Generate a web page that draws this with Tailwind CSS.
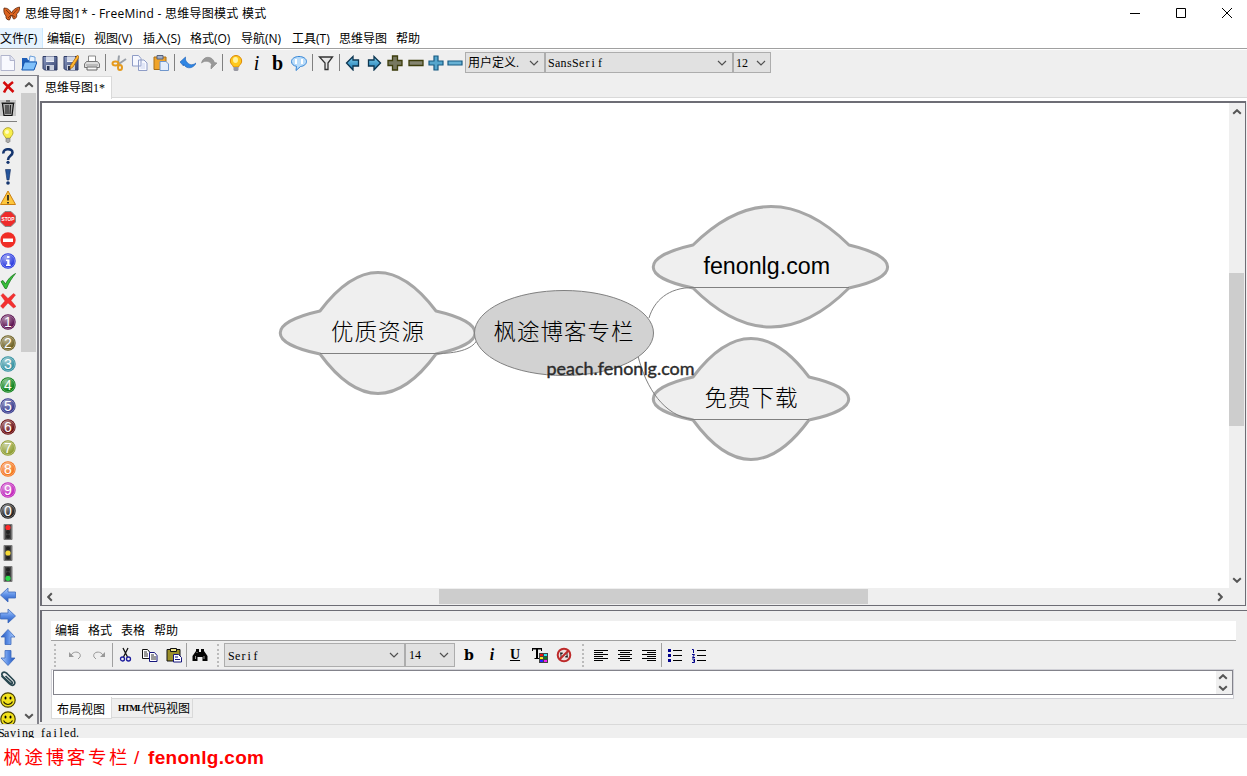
<!DOCTYPE html>
<html lang="zh-CN">
<head>
<meta charset="utf-8">
<title>FreeMind</title>
<script src="https://cdn.jsdelivr.net/npm/@tailwindcss/browser@4"></script>
</head>
<body class="w-[1247px] h-[776px] overflow-hidden bg-white text-black font-['Open_Sans','Noto_Sans_CJK_SC',sans-serif] text-[12px] leading-none whitespace-nowrap flex flex-col">
<svg class="absolute w-0 h-0">
  <defs>
    <linearGradient id="gb" x1="0" y1="0" x2="0" y2="1"><stop offset="0" stop-color="#b8d4ff"/><stop offset=".5" stop-color="#5b8ee6"/><stop offset="1" stop-color="#2454b8"/></linearGradient>
    <linearGradient id="gt" x1="0" y1="0" x2="0" y2="1"><stop offset="0" stop-color="#7fd0ee"/><stop offset="1" stop-color="#1a76b0"/></linearGradient>
    <radialGradient id="gl" cx=".35" cy=".25" r=".7"><stop offset="0" stop-color="#fff" stop-opacity=".55"/><stop offset="1" stop-color="#fff" stop-opacity="0"/></radialGradient>
    <symbol id="ball" viewBox="0 0 16 16"><circle cx="8" cy="8" r="7.7" fill="currentColor"/><circle cx="8" cy="8" r="6.6" fill="url(#gl)" stroke="#fff" stroke-opacity=".3"/></symbol>
    <symbol id="arr" viewBox="0 0 16 16"><path d="M.5 8 8 1v4h7.5v6H8v4z" fill="url(#gb)" stroke="#3c69bd" stroke-width=".8"/></symbol>
    <symbol id="tarr" viewBox="0 0 16 16"><path d="M1.500 8 8 1.500V5h5.500v6H8v4z" fill="url(#gt)" stroke="#0c3550" stroke-width="1.300"/></symbol>
    <symbol id="light" viewBox="0 0 16 16"><rect x="3.500" y="0" width="9" height="16" rx="1" fill="#777"/><rect x="5" y="1" width="6" height="14" fill="#444"/><circle cx="8" cy="3.500" r="2" fill="#222"/><circle cx="8" cy="8" r="2" fill="#222"/><circle cx="8" cy="12.500" r="2" fill="#222"/></symbol>
    <symbol id="smile" viewBox="0 0 16 16"><circle cx="8" cy="8" r="7.200" fill="#f2e21c" stroke="#4c4200" stroke-width="1.200"/><ellipse cx="5.500" cy="6" rx="1" ry="1.600"/><ellipse cx="10.500" cy="6" rx="1" ry="1.600"/><path d="M3.500 9.500c2 4 7 4 9 0" fill="none" stroke="#2a2500" stroke-width="1.100"/></symbol>
    <linearGradient id="gf" x1="0" y1="0" x2="1" y2="1"><stop offset="0" stop-color="#8d9cc4"/><stop offset="1" stop-color="#34426e"/></linearGradient>
    <symbol id="floppy" viewBox="0 0 16 16"><path d="M1 1.500h14v13.500H2.500L1 13.500z" fill="url(#gf)" stroke="#303d66"/><path d="M4 1.500h8v5.500H4z" fill="#eef1f8"/><path d="M4 3h8M4 5h8" stroke="#b6bfd6"/><path d="M4 10h8v5H4z" fill="#c9cfdd"/><path d="M5 11h2.500v4H5z" fill="#26304f"/></symbol>
    <symbol id="chev" viewBox="0 0 10 6"><path d="M1 1l4 4 4-4" fill="none" stroke="#505050" stroke-width="1.200"/></symbol>
    <symbol id="sc" viewBox="0 0 10 6"><path d="M1.200 4.800 5 1.200l3.800 3.600" fill="none" stroke="#555" stroke-width="2"/></symbol>
  </defs>
</svg>

<!-- title bar -->
<header class="h-[28px] shrink-0 flex items-center">
  <svg class="w-[17px] h-4 ml-[3px]" viewBox="0 0 17 16"><path d="M1 2c4 0 6 2 7.500 5C10 4 12 2 16.500 1c.5 3-1 6-3 7 1 3-1 5-3 5l-2-4-2 5c-2 0-4-1-3.500-4C1 8 .500 5 1 2z" fill="#dd6420" stroke="#5a260c" stroke-width=".8"/><path d="M3 4l4 4M14.500 3 10 8m-5 4 3-3m4 2-3-2" stroke="#5a260c" stroke-width=".7"/></svg>
  <div class="ml-[5px] text-[12px] tracking-[0.26px] h-4 leading-4">思维导图1* - FreeMind - 思维导图模式 模式</div>
  <div class="ml-auto flex items-center pr-[14px] gap-[34px] -mt-[2px]">
    <svg class="w-3 h-3" viewBox="0 0 12 12"><path d="M1 6.500h10" stroke="#000"/></svg>
    <svg class="w-3 h-3" viewBox="0 0 12 12"><path d="M1.500 1.500h9v9h-9z" fill="none" stroke="#000"/></svg>
    <svg class="w-3 h-3" viewBox="0 0 12 12"><path d="M1 1l10 10M11 1 1 11" stroke="#000"/></svg>
  </div>
</header>
<!-- menu bar -->
<nav class="h-[21px] shrink-0 flex border-b border-[#a0a0a0] leading-[22px] text-[12px]">
  <div class="w-[43px] bg-[#e5f3ff] border-r border-[#cce8ff] mr-1">文件(F)</div><div class="w-[47px]">编辑(E)</div><div class="w-[49px]">视图(V)</div><div class="w-[47px]">插入(S)</div><div class="w-[51px]">格式(O)</div><div class="w-[51px]">导航(N)</div><div class="w-[47px]">工具(T)</div><div class="w-[57px]">思维导图</div><div>帮助</div>
</nav>
<!-- main toolbar -->
<div class="h-[26px] shrink-0 bg-[#efefef] border-t border-white flex items-center pl-0">
  <div class="flex items-center -ml-[3px] w-[468px] shrink-0 [&>svg]:w-4 [&>svg]:h-4 [&>svg]:shrink-0 [&>svg]:mx-[2.5px] [&>b]:w-[21px] [&>b]:shrink-0 [&>b]:text-center [&>i]:w-px [&>i]:h-[17px] [&>i]:ml-[3px] [&>i]:mr-[2px] [&>i]:bg-[#808080] [&>i]:shrink-0">
    <svg viewBox="0 0 16 16"><path d="M1 .5h9.500L14.500 5v10.500H1z" fill="#f8f9fe" stroke="#b0b4cc"/><path d="M10 1v4.500h4" fill="#dfe3f2" stroke="#b0b4cc"/></svg>
    <svg viewBox="0 0 16 16"><path d="M1 3h5l1 2h7v9H1z" fill="#1f5fb8"/><path d="M9 1l5 1v5H8z" fill="#e8f3ff" stroke="#4d8bd2" stroke-width=".8"/><path d="M3.500 7H16l-3 8H.800z" fill="#7fc0fa" stroke="#1556ae"/></svg>
    <svg><use href="#floppy"/></svg>
    <svg viewBox="0 0 16 16"><use href="#floppy"/><path d="M14.500 0 16 2 10 12l-3 2 .500-3.500z" fill="#ffb62e" stroke="#a55f07" stroke-width=".7"/></svg>
    <svg viewBox="0 0 16 16"><path d="M4.500 1h7v6h-7z" fill="#fff" stroke="#888"/><path d="M2.500 6.500h11l2 2.500v3.500H.500V9z" fill="#ddd" stroke="#777"/><path d="M3 12h10v3H3z" fill="#f8f8f8" stroke="#666"/><path d="M2 10h12" stroke="#999"/></svg>
    <i></i>
    <svg viewBox="0 0 16 16"><path d="M8 .5 7 9M15 4 7 9.500" stroke="#9aa0a8" stroke-width="2"/><ellipse cx="4.500" cy="8.500" rx="3" ry="2" fill="none" stroke="#e59a1d" stroke-width="2"/><ellipse cx="9" cy="12.500" rx="2" ry="2.500" fill="none" stroke="#e59a1d" stroke-width="2"/></svg>
    <svg viewBox="0 0 16 16"><path d="M.5 .5h6l2.500 3V11H.5zM6.500 5h5.500l3 3v7.500h-8.500z" fill="#f6f8ff" stroke="#8e9cc6"/><path d="M8.500 9h4.500m-4.500 2h4.500m-4.500 2h4.500" stroke="#ccd4ee"/></svg>
    <svg viewBox="0 0 16 16"><path d="M1 2h12v12.500H1z" fill="#f0a42a" stroke="#a86e15"/><path d="M4 .500h6v3.500H4z" fill="#a3b0c8" stroke="#56637e"/><path d="M7 6.500h6l2.500 2.500v6.500H7z" fill="#e4eefc" stroke="#6f96cc"/></svg>
    <i></i>
    <svg viewBox="0 0 16 16"><path d="M0 7 5.500 2v3C8 10 12 11 16 8c-1 4-9 8-12.500 1v2z" fill="#2f86e4" stroke="#1e5fb5" stroke-width=".6"/></svg>
    <svg viewBox="0 0 16 16"><path d="M16 8l-6 6v-3.500h1C10 6 4 5 .500 8 2 1 11 0 13.500 7.500z" fill="#999" stroke="#888" stroke-width=".6"/></svg>
    <i></i>
    <svg viewBox="0 0 16 16"><path d="M8 .5a5.700 5.700 0 0 0-5.700 5.500c0 3 2.700 4 3.200 6h5c.5-2 3.200-3 3.200-6A5.700 5.700 0 0 0 8 .5z" fill="#ffc91c" stroke="#dd8a05"/><path d="M5.500 12h5v3l-1 1h-3l-1-1z" fill="#9797a0"/><ellipse cx="7.500" cy="5" rx="2.500" ry="3" fill="#fff3a0"/></svg>
    <b class="font-['Liberation_Serif',serif] text-[20px] italic font-medium">i</b>
    <b class="font-['Liberation_Serif',serif] text-[20px]">b</b>
    <svg viewBox="0 0 16 16"><path d="M8 1.500c4 0 7.500 2 7.500 5 0 2.500-2.500 4.700-6 5L5 15.500l.5-4.200C2.500 11 .500 9 .500 6.500c0-3 3.500-5 7.500-5z" fill="#b9dcfa" stroke="#3585d5"/><path d="M5 4v5m6-5v5" stroke="#fff" stroke-width="2"/></svg>
    <i></i>
    <svg viewBox="0 0 16 16"><path d="M1.500 2h13L10 8v6.500H7V8z" fill="#e6e6e6" stroke="#333" stroke-width="1.300"/></svg>
    <i></i>
    <svg><use href="#tarr"/></svg>
    <svg viewBox="0 0 16 16"><g transform="matrix(-1 0 0 1 16 0)"><use href="#tarr" width="16" height="16"/></g></svg>
    <svg viewBox="0 0 16 16"><path d="M5.500 1h5v4.500H15v5h-4.500V15h-5v-4.500H1v-5h4.500z" fill="#777860" stroke="#3d3d0c" stroke-width="1.300"/></svg>
    <svg viewBox="0 0 16 16"><path d="M1 5.500h14v5H1z" fill="#858571" stroke="#3d3d0c" stroke-width="1.300"/></svg>
    <svg viewBox="0 0 16 16" class="ml-[1.5px]!"><path d="M6 1h4v5h5v4h-5v5H6v-5H1V6h5z" fill="#55a6cd" stroke="#175a82" stroke-width="1.200"/></svg>
    <svg viewBox="0 0 16 16" class="ml-[1px]!"><path d="M1 6h14v4H1z" fill="#67b1d4" stroke="#175a82" stroke-width="1.200"/></svg>
  </div>
  <div class="flex h-[21px] font-['Liberation_Serif','Noto_Sans_CJK_SC',serif] text-[12px] [&>div]:border [&>div]:border-[#adadad] [&>div]:bg-[#e1e1e1] [&>div]:flex [&>div]:items-center [&>div]:justify-between [&>div]:pl-[2px]">
    <div class="w-[80px] pr-[5px]"><span class="text-[12px]">用户定义.</span><svg class="w-[10px] h-[6px]"><use href="#chev"/></svg></div>
    <div class="w-[188px] pr-[5px]"><svg class="w-[60px] h-[14px]"><text y="11" x="0 7 12.500 19 24 31 37.500 43.500 50">SansSerif</text></svg><svg class="w-[10px] h-[6px]"><use href="#chev"/></svg></div>
    <div class="w-[38px] pr-[4px]"><span>12</span><svg class="w-[10px] h-[6px]"><use href="#chev"/></svg></div>
  </div>
</div>

<div class="h-[649px] shrink-0 flex bg-[#efefef]">
  <!-- icon palette -->
  <aside class="w-[39px] shrink-0 flex border-t border-r border-[#83838b] overflow-hidden">
    <div class="w-[21px] flex flex-col shrink-0 [&>svg]:w-4 [&>svg]:h-4 [&>svg]:shrink-0 [&>svg]:mt-[2.5px] [&>svg]:mb-[2.5px] text-[14px] font-['Liberation_Sans',sans-serif]">
      <svg viewBox="0 0 16 16"><path d="M3.500 3l10 10M13 3C9 6 6 9 4 13.500" stroke="#d40a0a" stroke-width="2.500"/></svg>
      <svg viewBox="0 0 16 16"><path d="M0 0h16v16H0z" fill="#c9c9c9"/><path d="M2.500 3.500h11L12 15.500H4z" fill="#aaa" stroke="#111" stroke-width="1.200"/><path d="M1.500 3h13M6 1h4M6 5v9m2-9v9m2.500-9-.5 9" stroke="#222" stroke-width="1.200"/></svg>
      <div class="h-[6px] shrink-0 pt-[3px]"><div class="h-px w-[17px] bg-[#808080]"></div></div>
      <svg viewBox="0 0 16 16"><path d="M8 .7a5 5 0 0 0-5 5c0 2.500 2.300 3.500 2.800 5.500h4.400c.500-2 2.800-3 2.800-5.500a5 5 0 0 0-5-5z" fill="#f8ee4c" stroke="#b5a832"/><path d="M6 11.500h4v3l-1 1H7l-1-1z" fill="#aaa" stroke="#777" stroke-width=".6"/><circle cx="7" cy="5" r="2" fill="#fffcc4"/></svg>
      <svg viewBox="0 0 16 16"><path d="M3.500 5.500C2.500 0 12.500 0 12.500 4.500 12.500 8 8 7.500 8 12" fill="none" stroke="#14346e" stroke-width="2.600"/><circle cx="8" cy="14.300" r="1.600" fill="#14346e"/></svg>
      <svg viewBox="0 0 16 16"><path d="M5.500.5h5L9 11H7z" fill="#24549b" stroke="#102c5e" stroke-width=".6"/><circle cx="8" cy="14" r="1.800" fill="#14346e"/></svg>
      <svg viewBox="0 0 16 16"><path d="M8 1 15.500 14.500H.500z" fill="#fdc63c" stroke="#cc8012" stroke-linejoin="round"/><path d="M8 5v5.500M8 12v1.500" stroke="#222" stroke-width="1.700"/></svg>
      <svg viewBox="0 0 16 16"><path d="M5 .5h6L15.500 5v6L11 15.500H5L.500 11V5z" fill="#ee2b2b" stroke="#888"/><text x="1.600" y="10" font-size="4.800" font-weight="bold" fill="#fff" textLength="12.800">STOP</text></svg>
      <svg viewBox="0 0 16 16"><circle cx="8" cy="8" r="7.700" fill="#f02d26"/><path d="M3 6.500h10v3.500H3z" fill="#fff"/></svg>
      <svg viewBox="0 0 16 16" class="text-[#2b3be0]"><use href="#ball"/><path d="M7 3h2.500v2H7zM6 6.500h3.500v5h1.200V13H6v-1.500h1.200V8H6z" fill="#fff"/></svg>
      <svg viewBox="0 0 16 16" class="mt-[1.5px]!"><path d="M1 8.500l2-1 2.500 3.500C8 6 11 3 15.500.500 12 5 9 9 6.500 15.500H5z" fill="#36bf3a" stroke="#16791b" stroke-width=".8"/></svg>
      <svg viewBox="0 0 16 16" class="mt-[1.5px]!"><path d="M1 2.500 3 .500l5 5 5.500-5L15.500 2 11 7.500l5 6-2.500 1.500-5.500-5L3 15.500.500 13 5 8z" fill="#f43030" stroke="#cf1c1c" stroke-width=".4"/></svg>
      <svg viewBox="0 0 16 16" class="text-[#5c1050]"><use href="#ball"/><text x="8" y="13" text-anchor="middle" fill="#fff">1</text></svg>
      <svg viewBox="0 0 16 16" class="text-[#6d6020]"><use href="#ball"/><text x="8" y="13" text-anchor="middle" fill="#fff">2</text></svg>
      <svg viewBox="0 0 16 16" class="text-[#3090a0]"><use href="#ball"/><text x="8" y="13" text-anchor="middle" fill="#fff">3</text></svg>
      <svg viewBox="0 0 16 16" class="text-[#0a8015]"><use href="#ball"/><text x="8" y="13" text-anchor="middle" fill="#fff">4</text></svg>
      <svg viewBox="0 0 16 16" class="text-[#34388c]"><use href="#ball"/><text x="8" y="13" text-anchor="middle" fill="#fff">5</text></svg>
      <svg viewBox="0 0 16 16" class="text-[#680a0e]"><use href="#ball"/><text x="8" y="13" text-anchor="middle" fill="#fff">6</text></svg>
      <svg viewBox="0 0 16 16" class="text-[#8f9e32]"><use href="#ball"/><text x="8" y="13" text-anchor="middle" fill="#fff">7</text></svg>
      <svg viewBox="0 0 16 16" class="text-[#f4741c]"><use href="#ball"/><text x="8" y="13" text-anchor="middle" fill="#fff">8</text></svg>
      <svg viewBox="0 0 16 16" class="text-[#c026bc]"><use href="#ball"/><text x="8" y="13" text-anchor="middle" fill="#fff">9</text></svg>
      <svg viewBox="0 0 16 16" class="text-[#1e1e1e]"><use href="#ball"/><text x="8" y="13" text-anchor="middle" fill="#fff">0</text></svg>
      <svg viewBox="0 0 16 16"><use href="#light"/><circle cx="8" cy="3.500" r="2.600" fill="#ff2a2a"/></svg>
      <svg viewBox="0 0 16 16"><use href="#light"/><circle cx="8" cy="8" r="2.600" fill="#f5d935"/></svg>
      <svg viewBox="0 0 16 16"><use href="#light"/><circle cx="8" cy="12.300" r="2.600" fill="#2cd94a"/></svg>
      <svg viewBox="0 0 16 16"><use href="#arr"/></svg>
      <svg viewBox="0 0 16 16"><g transform="matrix(-1 0 0 1 16 0)"><use href="#arr" width="16" height="16"/></g></svg>
      <svg viewBox="0 0 16 16"><g transform="rotate(90 8 8)"><use href="#arr" width="16" height="16"/></g></svg>
      <svg viewBox="0 0 16 16"><g transform="rotate(-90 8 8)"><use href="#arr" width="16" height="16"/></g></svg>
      <svg viewBox="0 0 16 16"><path d="M1.500 5 9 12.500c4 4 8 0 4.500-3.500L7 2.500C3.500-.500 0 2.500 3 5.500l7 6.500c2 1.500 3 0 2-1L5.500 5" fill="none" stroke="#28464f" stroke-width="1.700"/></svg>
      <svg><use href="#smile"/></svg>
      <svg class="mt-[1px]!"><use href="#smile"/></svg>
    </div>
    <div class="w-[15px] shrink-0 flex flex-col items-center mr-[1px]">
      <svg class="w-[10px] h-[6px] mt-[6px] mb-[5px] shrink-0"><use href="#sc"/></svg>
      <div class="w-[15px] h-[259px] bg-[#cdcdcd] shrink-0"></div>
      <svg class="w-[10px] h-[6px] mt-auto mb-[5px] rotate-180 shrink-0"><use href="#sc"/></svg>
    </div>
    <div class="w-px bg-[#83838b]"></div>
  </aside>

  <main class="flex-1 min-w-0 flex flex-col">
    <!-- document tab -->
    <div class="h-[26px] shrink-0 flex items-start border-b-[3px] border-white">
      <div class="w-[73px] h-[23px] mt-[1px] bg-white border-t border-r border-[#d9d9d9] pl-[6px] leading-[19px] text-[12px] font-['Noto_Sans_CJK_SC',sans-serif]">思维导图<span class="font-['Liberation_Serif',serif] text-[12px]">1*</span></div>
      <div class="flex-1 h-[23px] border-b border-[#d9d9d9]"></div>
    </div>
    <!-- map view -->
    <section class="ml-px h-[505px] shrink-0 w-[1206px] border-2 border-r border-b border-[#6d6d75] flex flex-col bg-[#efefef]">
      <div class="h-[485px] flex shrink-0">
        <svg class="w-[1187px] h-[485px] bg-white shrink-0" viewBox="42 103 1187 485">
          <g fill="#efefef" stroke="#a6a6a6" stroke-width="3" stroke-linejoin="round">
            <path d="M693 245Q771 168 849 245C900 257 901 277 849 288Q771 366 693 288C640 277 640 257 693 245z"/>
            <path d="M693 377Q751 300 809 377C862 389 862 409 809 420Q751 499 693 420C640 409 640 389 693 377z"/>
            <path d="M320 311Q378 234 436 311C488 323 488 343 436 354Q378 433 320 354C267 343 267 323 320 311z"/>
          </g>
          <g fill="none" stroke="#808080">
            <path d="M320 353.500H437C455 353.500 472 350 477 340M693 287.500H849M649 318C654 301 668 287.500 693 287.500M693 419.500H809M638 356C646 388 664 416 693 419.500"/>
            <ellipse cx="564" cy="333" rx="89.500" ry="42.500" fill="#d2d2d2"/>
          </g>
          <g font-family="'Noto Sans CJK SC',sans-serif" font-weight="300" font-size="22.500">
            <text x="331" y="340" textLength="93">优质资源</text>
            <text x="493.500" y="340" textLength="140">枫途博客专栏</text>
            <text x="704.500" y="406" textLength="93">免费下载</text>
          </g>
          <text x="703.500" y="274" font-family="Liberation Sans" font-size="23.500" textLength="126.500" lengthAdjust="spacingAndGlyphs">fenonlg.com</text>
          <text x="546.500" y="375" font-family="Lato" font-size="18" fill="#2b2b2b" stroke="#2b2b2b" stroke-width=".4" textLength="148" lengthAdjust="spacingAndGlyphs">peach.fenonlg.com</text>
        </svg>
        <div class="w-4 flex flex-col items-center shrink-0 pr-px">
          <svg class="w-[10px] h-[6px] mt-[6px] mb-[158px] shrink-0"><use href="#sc"/></svg>
          <div class="w-[15px] h-[153px] bg-[#cdcdcd]"></div>
          <svg class="w-[10px] h-[6px] mt-auto mb-[5px] rotate-180 shrink-0"><use href="#sc"/></svg>
        </div>
      </div>
      <div class="flex items-center h-[17px]">
        <svg class="w-[6px] h-[10px] ml-[5px] shrink-0" viewBox="0 0 6 10"><path d="M4.800 1.200 1.200 5l3.600 3.800" fill="none" stroke="#555" stroke-width="2"/></svg>
        <div class="ml-[386px] w-[429px] h-[15px] bg-[#cdcdcd]"></div>
        <svg class="w-[6px] h-[10px] ml-[349px] shrink-0" viewBox="0 0 6 10"><path d="M1.200 1.200 4.800 5 1.200 8.800" fill="none" stroke="#555" stroke-width="2"/></svg>
      </div>
    </section>
    <!-- note editor -->
    <section class="ml-px mt-1 h-[112px] shrink-0 border-l-2 border-t border-[#6d6d75] pl-[9px] pt-[10px] flex flex-col items-start">
      <div class="w-[1185px] h-[20px] bg-white border-b border-[#a0a0a0] shrink-0 flex gap-[9px] pl-1 leading-[19px] text-[12px]"><span>编辑</span><span>格式</span><span>表格</span><span>帮助</span></div>
      <div class="h-[28px] shrink-0 flex items-center [&>svg]:w-4 [&>svg]:h-4 [&>svg]:shrink-0 [&>svg]:mr-2 [&>i]:w-px [&>i]:h-[24px] [&>i]:bg-[#a0a0a0] [&>i]:shrink-0">
        <div class="w-0 h-[23px] ml-[3px] border-l-2 border-dotted border-[#bbb]"></div>
        <svg class="ml-[11px]" viewBox="0 0 16 16"><path d="M4 8c3-5 11-3 9 2l-2 2" fill="none" stroke="#999"/><path d="M2 5v5h5z" fill="#999"/></svg>
        <svg class="mr-[5px]!" viewBox="0 0 16 16"><path d="M12 8C9 3 1 5 3 10l2 2" fill="none" stroke="#999"/><path d="M14 5v5H9z" fill="#999"/></svg>
        <i></i>
        <svg class="ml-[5px]" viewBox="0 0 16 16"><path d="M5 1l4.500 9M10 1 5.500 10" stroke="#111" stroke-width="1.300"/><circle cx="4.500" cy="12" r="2" fill="none" stroke="#1c1c9c" stroke-width="1.300"/><circle cx="10.500" cy="12" r="2" fill="none" stroke="#1c1c9c" stroke-width="1.300"/></svg>
        <svg viewBox="0 0 16 16"><path d="M.5 2.500h5l2.500 3v6H.5z" fill="#fff" stroke="#111"/><path d="M7.500 5.500h5l2.500 3v6H7.500z" fill="#fff" stroke="#16167c"/><path d="M2 5h3M2 7h4M2 9h4m3-1h3m-3 2h5m-5 2h5" stroke="#333"/></svg>
        <svg class="mr-[4px]!" viewBox="0 0 16 16"><path d="M1 2.500h13v11.500H1z" fill="#9b8f28" stroke="#111"/><path d="M4.500 1.500h6v3h-6z" fill="#eee28a" stroke="#111"/><path d="M7.500 7.500h5l3 3v4.500h-8z" fill="#fff" stroke="#16167c"/><path d="M9 10h3m-3 2.500h5" stroke="#16167c"/></svg>
        <i></i>
        <svg class="ml-[5px] mr-[9px]!" viewBox="0 0 16 16"><path d="M4 2h3v3h2V2h3v2l3.500 5v5h-5v-4H5.500v4H.5V9L4 4z" fill="#050505"/><path d="M3.500 9v3M12 9v3M5 5v1" stroke="#bbb" stroke-width=".8"/></svg>
        <div class="w-0 h-[23px] border-l-2 border-dotted border-[#bbb] mr-[5px]"></div>
        <div class="flex h-[24px] font-['Liberation_Serif',serif] text-[12px] [&>div]:border [&>div]:border-[#adadad] [&>div]:bg-[#e1e1e1] [&>div]:flex [&>div]:items-center [&>div]:justify-between [&>div]:pl-[3px] [&>div]:pr-[5px] mr-[6px]">
          <div class="w-[181px]"><svg class="w-[40px] h-[14px]"><text y="12" x="0 7 13.500 19.500 25.500">Serif</text></svg><svg class="w-[10px] h-[6px]"><use href="#chev"/></svg></div>
          <div class="w-[50px]"><span>14</span><svg class="w-[10px] h-[6px]"><use href="#chev"/></svg></div>
        </div>
        <b class="w-4 mr-[7px] text-center font-['DejaVu_Serif',serif] text-[14px]">b</b>
        <b class="w-4 mr-[7px] text-center font-['Liberation_Serif',serif] italic text-[16px]">i</b>
        <b class="w-4 mr-[9px] text-center font-['Liberation_Serif',serif] underline text-[14px]">U</b>
        <svg viewBox="0 0 16 16"><path d="M0 1h10v3H9V2.500H6V11h1.500v1h-5v-1H4V2.500H1V4H0z"/><path d="M7 6h9v10H7z" fill="#444"/><path d="M8 7h3v2H8z" fill="#e11"/><path d="M12 7h3v2h-3z" fill="#2ce6ec"/><path d="M8 10h3v2H8z" fill="#f8ee22"/><path d="M12 10h3v2h-3z" fill="#078423"/><path d="M8 13h3v2H8z" fill="#22f"/><path d="M12 13h3v2h-3z" fill="#e2e"/></svg>
        <svg class="mr-[10px]!" viewBox="0 0 16 16"><circle cx="8" cy="8" r="6.300" fill="#ecdede" stroke="#bd2a2a" stroke-width="2"/><path d="M5 5v6m6-6v6M4 7l3-1m2 4 3-1" stroke="#222"/><path d="M12 4 4 12" stroke="#bd2a2a" stroke-width="2"/></svg>
        <div class="w-0 h-[23px] border-l-2 border-dotted border-[#bbb] mr-[9px]"></div>
        <svg viewBox="0 0 16 16"><path d="M1 3.500h14M1 5.500h9M1 7.500h14M1 9.500h9M1 11.500h14M1 13.500h9" stroke="#000"/></svg>
        <svg viewBox="0 0 16 16"><path d="M1 3.500h14M3 5.500h10M1 7.500h14M3 9.500h10M1 11.500h14M3 13.500h10" stroke="#000"/></svg>
        <svg class="mr-[4px]!" viewBox="0 0 16 16"><path d="M1 3.500h14M6 5.500h9M1 7.500h14M6 9.500h9M1 11.500h14M6 13.500h9" stroke="#000"/></svg>
        <i></i>
        <svg class="ml-[5px]" viewBox="0 0 16 16"><path d="M6 3.500h9M6 8.500h9M6 13.500h9" stroke="#000"/><path d="M1 2h3v3H1zM1 7h3v3H1zM1 12h3v3H1z" fill="#00008b"/></svg>
        <svg viewBox="0 0 16 16"><path d="M6 3.500h9M6 8.500h9M6 13.500h9" stroke="#000"/><path d="M1 2.500h1.500V6M1 7.500h2.500L1.500 10.500H4M1 12h2.500v3.500H1m1-1.700h1.500" fill="none" stroke="#00008b"/></svg>
      </div>
      <div class="w-[1183px] h-[30px] border border-[#d0d0d6] bg-white shrink-0 pl-px">
        <div class="w-[1180px] h-[25px] border border-[#83838b] bg-white flex justify-end">
          <div class="w-4 bg-[#efefef] flex flex-col justify-between items-center py-[3px] pr-[2px]"><svg class="w-[10px] h-[6px]"><use href="#sc"/></svg><svg class="w-[10px] h-[6px] rotate-180"><use href="#sc"/></svg></div>
        </div>
      </div>
      <div class="flex items-start -mt-[2px] text-[12px] font-['Noto_Sans_CJK_SC',sans-serif]">
        <div class="w-[61px] h-[22px] bg-white border border-t-0 border-[#d9d9d9] pl-[5px] leading-[24px]">布局视图</div>
        <div class="w-[81px] h-[20px] mt-px border border-l-0 border-[#d9d9d9] pl-[6px] leading-[18px] bg-[#efefef] flex items-center"><span class="w-[24px] font-['Liberation_Serif',serif] text-[9px] font-bold tracking-[-0.8px]">HTML</span>代码视图</div>
      </div>
    </section>
  </main>
</div>
<!-- status bar -->
<div class="h-[14px] shrink-0 bg-[#efefef] border-t border-[#d9d9d9] font-['Liberation_Serif',serif] text-[12px] flex items-start"><svg class="w-[90px] h-[13px] shrink-0"><text y="12" x="-2 4 10 17 22 28 34 41 46 53.500 59.500 64 70 76">Saving failed.</text></svg></div>
<footer class="flex-1 flex items-center text-[#ff0000] pl-[3px]">
  <svg class="w-[270px] h-[38px]" viewBox="3 738 270 38" fill="#f00"><text x="3.500" y="764" font-family="'Noto Sans CJK SC',sans-serif" font-size="18.500" textLength="124">枫途博客专栏</text><text x="134" y="764" font-family="Liberation Sans" font-size="19">/</text><text x="148" y="764" font-family="Liberation Sans" font-weight="bold" font-size="19" textLength="116">fenonlg.com</text></svg>
</footer>
</body>
</html>
